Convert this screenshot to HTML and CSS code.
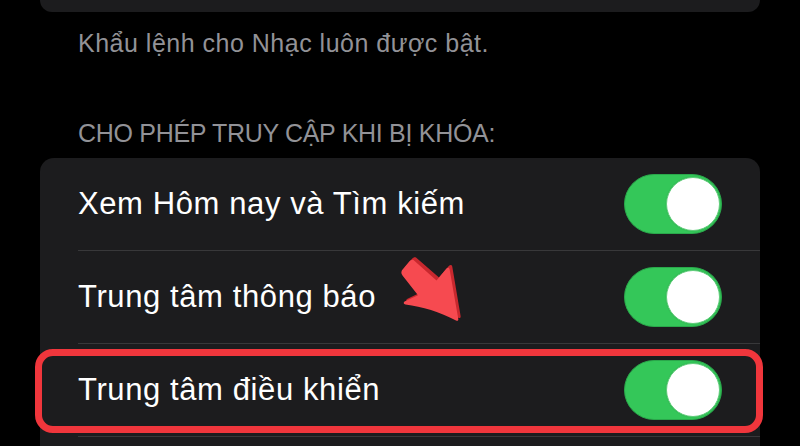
FILE: index.html
```html
<!DOCTYPE html>
<html lang="vi">
<head>
<meta charset="utf-8">
<title>Cài đặt</title>
<link rel="stylesheet" href="styles.css">
</head>
<body>
<div class="screen">
  <div class="top-card"></div>
  <p class="footnote">Khẩu lệnh cho Nhạc luôn được bật.</p>
  <h2 class="section-header">CHO PHÉP TRUY CẬP KHI BỊ KHÓA:</h2>
  <div class="card">
    <div class="row">
      <span class="label">Xem Hôm nay và Tìm kiếm</span>
      <span class="toggle on"><span class="knob"></span></span>
    </div>
    <div class="row">
      <span class="label">Trung tâm thông báo</span>
      <svg class="arrow" width="80" height="80" viewBox="0 0 80 80" aria-hidden="true">
        <path class="arrow-shade" d="M26 3.5 L49 23.5 L59 11.8 C60.6 10.3 62 10.9 62.3 12.8 L70.6 62 C70.9 63.9 69.9 64.5 68.3 63.8 C52 55.5 34 50 18 48 C16 47.7 15.6 46.3 17 45 L30.5 38.5 L15.5 18.5 C13.8 16.2 14 14 16 12 L22 4.8 C23.3 3.3 24.7 2.7 26 3.5 Z"/>
        <path class="arrow-face" d="M23.5 6 L46.5 26.5 L56.5 14.5 C57.8 13.1 59.3 13.5 59.6 15.3 L68.3 65 C68.6 66.6 67.6 67.2 66 66.5 C50 58 32 52.5 15.5 50.5 C13.5 50.2 13.1 48.8 14.5 47.5 L28 41.2 L12.5 21.5 C10.8 19.2 11 17 13 15 L19.3 7.5 C20.6 6 22.2 5.2 23.5 6 Z"/>
      </svg>
      <span class="toggle on"><span class="knob"></span></span>
    </div>
    <div class="row">
      <span class="label">Trung tâm điều khiển</span>
      <span class="toggle on"><span class="knob"></span></span>
      <span class="highlight"></span>
    </div>
  </div>
</div>
</body>
</html>
```
FILE: styles.css
```css
html, body {
  margin: 0;
  padding: 0;
  background: #000;
}
body {
  width: 800px;
  height: 446px;
  overflow: hidden;
  font-family: "Liberation Sans", Arial, sans-serif;
}
.screen {
  height: 446px;
  overflow: hidden;
  display: flex;
  flex-direction: column;
}
.top-card {
  flex: none;
  height: 12px;
  margin: 0 40px;
  background: #1c1c1e;
  border-radius: 0 0 14px 14px;
}
.footnote {
  flex: none;
  margin: 16px 0 0 78px;
  font-size: 25px;
  line-height: 30px;
  letter-spacing: 0.5px;
  color: #929297;
  font-weight: normal;
}
.section-header {
  flex: none;
  margin: 60px 0 0 78px;
  font-size: 25px;
  line-height: 30px;
  letter-spacing: -0.3px;
  color: #929297;
  font-weight: normal;
}
.card {
  flex: 1;
  margin: 10px 40px 0 40px;
  background: #1c1c1e;
  border-radius: 14px 14px 0 0;
  display: flex;
  flex-direction: column;
}
.row {
  position: relative;
  flex: none;
  height: 92px;
  margin-left: 38px;
  padding-right: 38px;
  border-bottom: 1px solid #38383a;
  display: flex;
  align-items: center;
  justify-content: space-between;
}
.label {
  font-size: 31px;
  line-height: 36px;
  letter-spacing: 0.6px;
  color: #fff;
}
.toggle {
  position: relative;
  width: 98px;
  height: 60px;
  box-sizing: border-box;
  border-radius: 30px;
  background: #34c759;
  border: 1px solid #2aa84b;
  display: flex;
  align-items: center;
  justify-content: flex-end;
  padding-right: 1px;
}
.knob {
  width: 54px;
  height: 54px;
  box-sizing: border-box;
  border-radius: 50%;
  background: #fff;
  border: 1.5px solid #5fcf7a;
  box-shadow: 0 0 1px rgba(0,0,0,0.25);
}
.highlight {
  position: absolute;
  left: -43px;
  top: 5px;
  width: 728px;
  height: 84px;
  box-sizing: border-box;
  border: 7px solid #f0363c;
  border-radius: 18px;
  pointer-events: none;
}
.arrow {
  position: absolute;
  left: 312px;
  top: 3px;
}
.arrow-shade {
  fill: #c8282e;
}
.arrow-face {
  fill: #f64a50;
}
```
